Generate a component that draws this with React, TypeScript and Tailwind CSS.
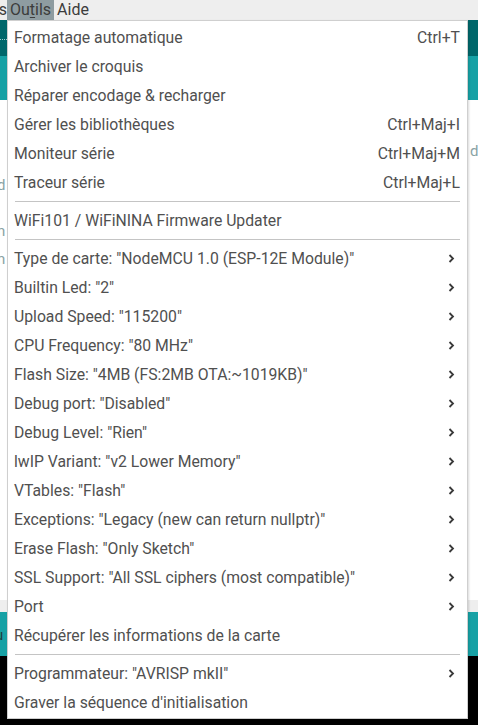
import { FC } from "react";

type Item =
  | { kind: "item"; label: string; shortcut?: string; sub?: boolean }
  | { kind: "sep" };

const items: Item[] = [
  { kind: "item", label: "Formatage automatique", shortcut: "Ctrl+T" },
  { kind: "item", label: "Archiver le croquis" },
  { kind: "item", label: "Réparer encodage & recharger" },
  { kind: "item", label: "Gérer les bibliothèques", shortcut: "Ctrl+Maj+I" },
  { kind: "item", label: "Moniteur série", shortcut: "Ctrl+Maj+M" },
  { kind: "item", label: "Traceur série", shortcut: "Ctrl+Maj+L" },
  { kind: "sep" },
  { kind: "item", label: "WiFi101 / WiFiNINA Firmware Updater" },
  { kind: "sep" },
  { kind: "item", label: 'Type de carte: "NodeMCU 1.0 (ESP-12E Module)"', sub: true },
  { kind: "item", label: 'Builtin Led: "2"', sub: true },
  { kind: "item", label: 'Upload Speed: "115200"', sub: true },
  { kind: "item", label: 'CPU Frequency: "80 MHz"', sub: true },
  { kind: "item", label: 'Flash Size: "4MB (FS:2MB OTA:~1019KB)"', sub: true },
  { kind: "item", label: 'Debug port: "Disabled"', sub: true },
  { kind: "item", label: 'Debug Level: "Rien"', sub: true },
  { kind: "item", label: 'lwIP Variant: "v2 Lower Memory"', sub: true },
  { kind: "item", label: 'VTables: "Flash"', sub: true },
  { kind: "item", label: 'Exceptions: "Legacy (new can return nullptr)"', sub: true },
  { kind: "item", label: 'Erase Flash: "Only Sketch"', sub: true },
  { kind: "item", label: 'SSL Support: "All SSL ciphers (most compatible)"', sub: true },
  { kind: "item", label: "Port", sub: true },
  { kind: "item", label: "Récupérer les informations de la carte" },
  { kind: "sep" },
  { kind: "item", label: 'Programmateur: "AVRISP mkII"', sub: true },
  { kind: "item", label: "Graver la séquence d'initialisation" },
];

const Chevron: FC = () => (
  <svg width="7" height="9" viewBox="0 0 7 9" className="mr-[5px]">
    <path d="M1.5 1 L5 4.5 L1.5 8" fill="none" stroke="#3a3a3a" strokeWidth="1.8" />
  </svg>
);

const App: FC = () => {
  return (
    <div
      className="relative w-[478px] h-[725px] overflow-hidden bg-white text-[#505050]"
      style={{ fontFamily: "Roboto, 'Liberation Sans', sans-serif" }}
    >
      {/* menu bar */}
      <div className="flex h-[20px] items-center bg-[#eeeeee] text-[16px] leading-[20px] text-[#3c3c3c]">
        <span className="w-[7px] overflow-hidden whitespace-nowrap text-right">
          <span className="inline-block -ml-[2px]">s</span>
        </span>
        <span className="bg-[#8e9ca1] pl-[3px] pr-[3px] h-[20px]">
          Ou<span className="underline underline-offset-2">t</span>ils
        </span>
        <span className="pl-[3px]">Aide</span>
      </div>

      {/* window behind the menu */}
      <div className="flex flex-col h-[705px]">
        <div className="h-[36px] bg-[#00676b] relative">
          <div className="absolute left-0 top-[19px] w-[7px] border-t border-dotted border-[#9fd2d3]" />
        </div>
        <div className="h-[44px] bg-[#17a1a5]" />
        <div className="flex-1 bg-white relative text-[15px] text-[#8aa3a5]">
          <span className="absolute left-[-3px] top-[74px]">d</span>
          <span className="absolute left-[-3px] top-[120px]">n</span>
          <span className="absolute left-[-3px] top-[148px]">n</span>
          <span className="absolute left-[470px] top-[40px]">d'</span>
        </div>
        <div className="h-[12px] bg-[#eeeeee]" />
        <div className="h-[44px] bg-[#17a1a5] relative">
          <span className="absolute left-[-5px] top-[12px] text-[15px] text-[#1f3f40]">u</span>
        </div>
        <div className="h-[69px] bg-black" />
      </div>

      {/* dropdown */}
      <div className="absolute left-[7px] top-[20px] w-[461px] bg-white border border-[#cfcfcf] pt-[2px] pb-[1px] text-[15.75px] shadow-[1px_1px_2px_rgba(0,0,0,0.15)]">
        {items.map((it, i) =>
          it.kind === "sep" ? (
            <div key={i} className="h-[9px] flex items-center pl-[7px] pr-[7px]">
              <div className="h-px w-full bg-[#c4c4c4]" />
            </div>
          ) : (
            <div key={i} className="h-[29px] flex items-center justify-between pl-[6px] pr-[7px] whitespace-nowrap">
              <span>{it.label}</span>
              {it.shortcut && <span>{it.shortcut}</span>}
              {it.sub && <Chevron />}
            </div>
          )
        )}
      </div>
    </div>
  );
};

export default App;
